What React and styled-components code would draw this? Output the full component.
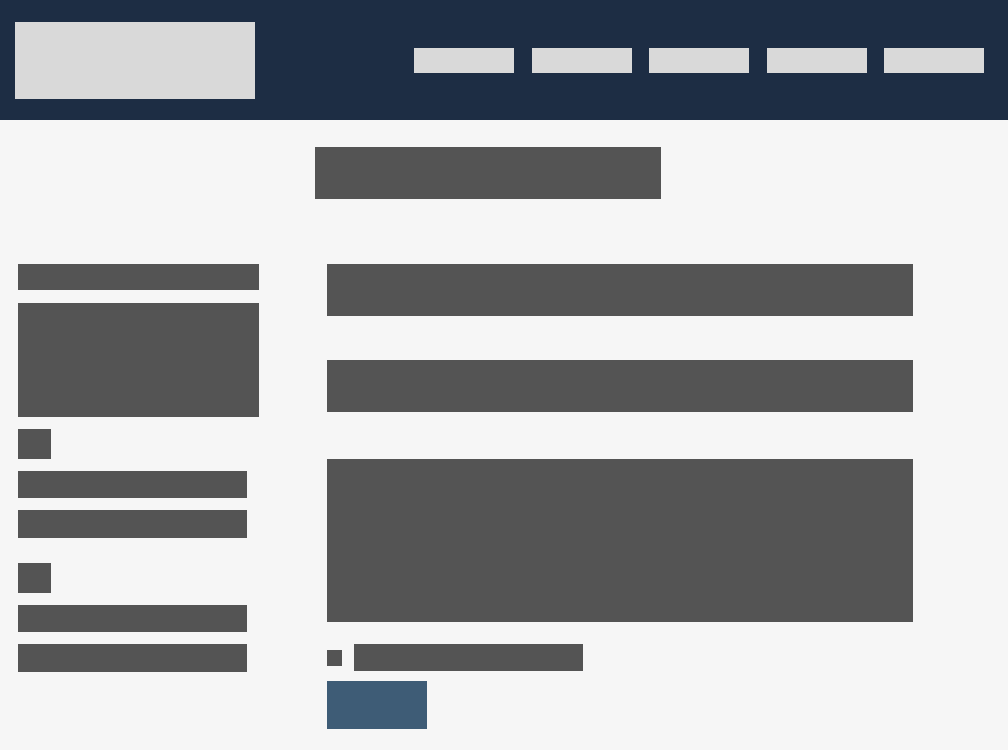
import React from 'react';
import styled, { createGlobalStyle } from 'styled-components';

const GlobalStyle = createGlobalStyle`
  *, *::before, *::after { box-sizing: border-box; }
  body {
    margin: 0;
    background: #f6f6f6;
    color: #545454;
    font-family: "Liberation Sans", Arial, sans-serif;
  }
`;

const Header = styled.header`
  display: flex;
  align-items: center;
  justify-content: space-between;
  gap: 24px;
  min-height: 120px;
  padding: 0 24px 0 15px;
  background: #1d2d44;
`;

const Logo = styled.a`
  flex: 0 1 240px;
  height: 77px;
  background: #d9d9d9;
`;

const Nav = styled.nav`
  display: flex;
  flex: 0 1 570px;
  justify-content: space-between;
`;

const NavLink = styled.a`
  width: 100px;
  height: 25px;
  background: #d9d9d9;
`;

const TitleRow = styled.div`
  display: flex;
  justify-content: center;
  padding: 27px 32px 65px 0;
`;

const Title = styled.h1`
  width: 346px;
  height: 52px;
  margin: 0;
  background: #545454;
`;

const Columns = styled.main`
  display: grid;
  grid-template-columns: 241px minmax(0, 1fr);
  column-gap: 68px;
  align-items: start;
  padding: 0 95px 21px 18px;
`;

const Sidebar = styled.aside`
  display: flex;
  flex-direction: column;
  gap: 12px;
`;

const SidebarHeading = styled.h2`
  height: 26px;
  margin: 0 0 1px;
  background: #545454;
`;

const Intro = styled.p`
  height: 114px;
  margin: 0;
  background: #545454;
`;

const ContactGroup = styled.section`
  display: flex;
  flex-direction: column;
  gap: 12px;
  padding-bottom: 13px;
`;

const ContactIcon = styled.span`
  width: 33px;
  height: 30px;
  background: #545454;
`;

const TextLine = styled.span`
  width: 229px;
  height: ${({ $tall }) => ($tall ? '28px' : '27px')};
  background: #545454;
`;

const Form = styled.form`
  display: flex;
  flex-direction: column;
  align-items: flex-start;
`;

const TextField = styled.input`
  width: 100%;
  height: 52px;
  margin: 0 0 44px;
  padding: 0 12px;
  border: 0;
  border-radius: 0;
  background: #545454;
  color: #f6f6f6;
  font: inherit;
`;

const MessageField = styled.textarea`
  display: block;
  width: 100%;
  height: 163px;
  margin: 3px 0 22px;
  padding: 12px;
  border: 0;
  border-radius: 0;
  background: #545454;
  color: #f6f6f6;
  font: inherit;
  resize: none;
`;

const Consent = styled.label`
  display: flex;
  align-items: center;
  gap: 12px;
  margin-bottom: 10px;
`;

const Checkbox = styled.input`
  appearance: none;
  width: 15px;
  height: 16px;
  margin: 0;
  background: #545454;
`;

const SubmitButton = styled.button`
  width: 100px;
  height: 48px;
  padding: 0;
  border: 0;
  background: #3e5c76;
`;

const pages = ['Home', 'About', 'Services', 'News', 'Contact'];
const contacts = ['Phone', 'Address'];

export default function App() {
  return (
    <>
      <GlobalStyle />
      <Header>
        <Logo href="#home" aria-label="Home page" />
        <Nav aria-label="Main">
          {pages.map((page) => (
            <NavLink key={page} href={`#${page.toLowerCase()}`} aria-label={page} />
          ))}
        </Nav>
      </Header>
      <TitleRow>
        <Title aria-label="Contact" />
      </TitleRow>
      <Columns>
        <Sidebar>
          <SidebarHeading aria-label="Details" />
          <Intro />
          {contacts.map((contact) => (
            <ContactGroup key={contact} aria-label={contact}>
              <ContactIcon />
              <TextLine />
              <TextLine $tall />
            </ContactGroup>
          ))}
        </Sidebar>
        <Form onSubmit={(event) => event.preventDefault()}>
          <TextField type="text" aria-label="Name" />
          <TextField type="email" aria-label="Email" />
          <MessageField aria-label="Message" />
          <Consent>
            <Checkbox type="checkbox" aria-label="I agree" />
            <TextLine />
          </Consent>
          <SubmitButton type="submit" aria-label="Send" />
        </Form>
      </Columns>
    </>
  );
}
